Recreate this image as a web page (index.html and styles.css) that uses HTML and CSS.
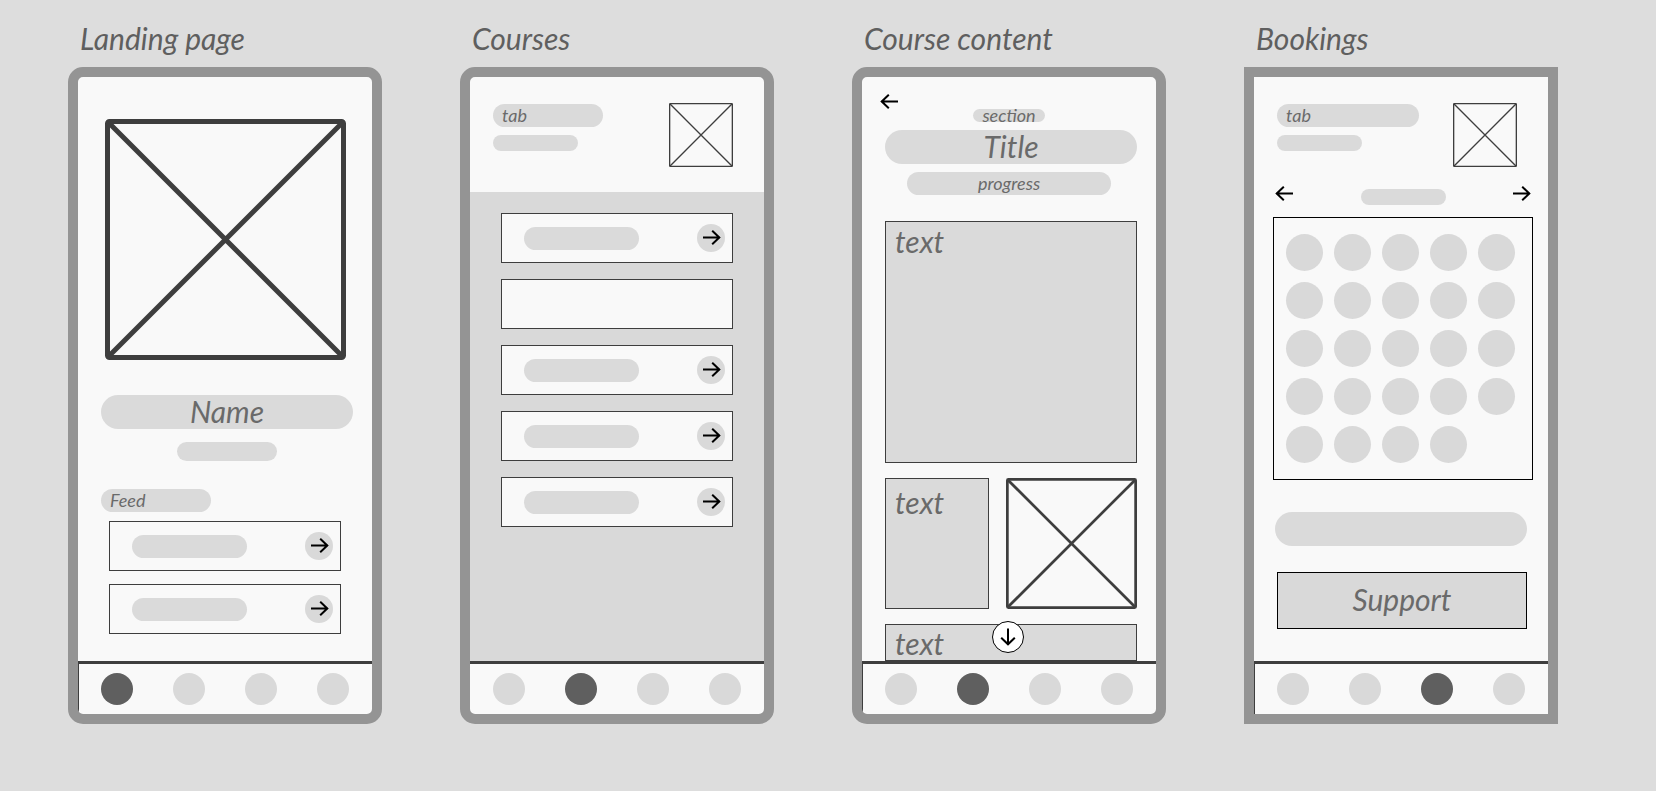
FILE: index.html
```html
<!DOCTYPE html>
<html lang="en">
<head>
<meta charset="utf-8">
<meta name="viewport" content="width=device-width, initial-scale=1">
<title>Course app wireframes</title>
<link rel="stylesheet" href="styles.css">
</head>
<body>
<svg class="sprite" aria-hidden="true">
  <symbol id="image" viewBox="0 0 241 241">
    <path d="M4 4L237 237M237 4L4 237" fill="none" stroke="#3e3e3e" stroke-width="5"/>
    <rect x="2.5" y="2.5" width="236" height="236" rx="2" fill="none" stroke="#3e3e3e" stroke-width="5"/>
  </symbol>
  <symbol id="right" viewBox="0 0 20 16">
    <path d="M2 7.5H19M11.2 0.7L18.3 7.5L11.2 14.3" fill="none" stroke="#000" stroke-width="2"/>
  </symbol>
  <symbol id="left" viewBox="0 0 20 16">
    <path d="M18 7.5H1M8.8 0.7L1.7 7.5L8.8 14.3" fill="none" stroke="#000" stroke-width="2"/>
  </symbol>
  <symbol id="down" viewBox="0 0 16 20">
    <path d="M8 1.5V18M1.2 10.7L8 17.3L14.8 10.7" fill="none" stroke="#000" stroke-width="2"/>
  </symbol>
</svg>

<main class="board">
  <section class="frame">
    <h2 class="frame-title">Landing page</h2>
    <div class="phone">
      <div class="screen">
        <svg class="hero" role="img" aria-label="Profile image"><use href="#image"/></svg>
        <div class="pill pill-large name">Name</div>
        <div class="subtitle-row"><div class="pill subtitle"></div></div>
        <h3 class="pill pill-tag feed-tag">Feed</h3>
        <div class="list feed">
          <div class="item"><span class="pill item-label"></span><button class="round" aria-label="Open"><svg class="icon"><use href="#right"/></svg></button></div>
          <div class="item"><span class="pill item-label"></span><button class="round" aria-label="Open"><svg class="icon"><use href="#right"/></svg></button></div>
        </div>
      </div>
      <nav class="tabs edge">
        <button class="dot active" aria-label="Home"></button><button class="dot" aria-label="Courses"></button><button class="dot" aria-label="Bookings"></button><button class="dot" aria-label="More"></button>
      </nav>
    </div>
  </section>

  <section class="frame">
    <h2 class="frame-title">Courses</h2>
    <div class="phone">
      <div class="screen">
        <header class="head">
          <div class="head-text"><h3 class="pill pill-tag">tab</h3><div class="pill pill-small"></div></div>
          <svg class="thumb" role="img" aria-label="Image"><use href="#image"/></svg>
        </header>
        <div class="list courses">
          <div class="item"><span class="pill item-label"></span><button class="round" aria-label="Open"><svg class="icon"><use href="#right"/></svg></button></div>
          <div class="item"></div>
          <div class="item"><span class="pill item-label"></span><button class="round" aria-label="Open"><svg class="icon"><use href="#right"/></svg></button></div>
          <div class="item"><span class="pill item-label"></span><button class="round" aria-label="Open"><svg class="icon"><use href="#right"/></svg></button></div>
          <div class="item"><span class="pill item-label"></span><button class="round" aria-label="Open"><svg class="icon"><use href="#right"/></svg></button></div>
        </div>
      </div>
      <nav class="tabs">
        <button class="dot" aria-label="Home"></button><button class="dot active" aria-label="Courses"></button><button class="dot" aria-label="Bookings"></button><button class="dot" aria-label="More"></button>
      </nav>
    </div>
  </section>

  <section class="frame">
    <h2 class="frame-title">Course content</h2>
    <div class="phone">
      <div class="screen">
        <div class="back-row"><button class="plain" aria-label="Back"><svg class="icon"><use href="#left"/></svg></button></div>
        <div class="pill section-tag">section</div>
        <h3 class="pill pill-large title">Title</h3>
        <div class="pill progress">progress</div>
        <div class="content">
          <div class="card card-tall">text</div>
          <div class="pair">
            <div class="card card-side">text</div>
            <svg class="picture" role="img" aria-label="Image"><use href="#image"/></svg>
          </div>
          <div class="card card-last">text<button class="scroll" aria-label="Scroll down"><svg class="icon-down"><use href="#down"/></svg></button></div>
        </div>
      </div>
      <nav class="tabs edge">
        <button class="dot" aria-label="Home"></button><button class="dot active" aria-label="Courses"></button><button class="dot" aria-label="Bookings"></button><button class="dot" aria-label="More"></button>
      </nav>
    </div>
  </section>

  <section class="frame">
    <h2 class="frame-title">Bookings</h2>
    <div class="phone square">
      <div class="screen">
        <header class="head head-short">
          <div class="head-text"><h3 class="pill pill-tag wide">tab</h3><div class="pill pill-small"></div></div>
          <svg class="thumb" role="img" aria-label="Image"><use href="#image"/></svg>
        </header>
        <div class="month">
          <button class="plain" aria-label="Previous month"><svg class="icon"><use href="#left"/></svg></button>
          <div class="pill pill-small month-name"></div>
          <button class="plain" aria-label="Next month"><svg class="icon"><use href="#right"/></svg></button>
        </div>
        <div class="calendar">
          <i class="day"></i><i class="day"></i><i class="day"></i><i class="day"></i><i class="day"></i>
          <i class="day"></i><i class="day"></i><i class="day"></i><i class="day"></i><i class="day"></i>
          <i class="day"></i><i class="day"></i><i class="day"></i><i class="day"></i><i class="day"></i>
          <i class="day"></i><i class="day"></i><i class="day"></i><i class="day"></i><i class="day"></i>
          <i class="day"></i><i class="day"></i><i class="day"></i><i class="day"></i>
        </div>
        <div class="pill pill-large booking"></div>
        <button class="support">Support</button>
      </div>
      <nav class="tabs edge">
        <button class="dot" aria-label="Home"></button><button class="dot" aria-label="Courses"></button><button class="dot active" aria-label="Bookings"></button><button class="dot" aria-label="More"></button>
      </nav>
    </div>
  </section>
</main>
</body>
</html>
```

FILE: styles.css
```css
* {
  box-sizing: border-box;
}

body {
  margin: 0;
  background: #dddddd;
  color: #6a6a6a;
  font-family: Lato, "Open Sans", sans-serif;
  font-style: italic;
}

h2,
h3 {
  margin: 0;
  font-weight: 400;
}

button {
  margin: 0;
  padding: 0;
  border: 0;
  background: none;
  color: inherit;
  font: inherit;
  cursor: pointer;
}

svg {
  display: block;
}

.sprite {
  position: absolute;
  width: 0;
  height: 0;
}

.board {
  display: grid;
  grid-template-columns: repeat(4, minmax(0, 1fr));
  gap: 78px;
  padding: 20px 98px 40px 68px;
}

.frame {
  display: flex;
  flex-direction: column;
}

.frame-title {
  margin-bottom: 11px;
  padding-left: 12px;
  color: #5f5f5f;
  font-size: 30px;
  line-height: 36px;
  white-space: nowrap;
}

.phone {
  display: flex;
  flex: 1;
  flex-direction: column;
  min-height: 657px;
  overflow: hidden;
  border: 10px solid #949494;
  border-radius: 15px;
  background: #f9f9f9;
}

.square {
  border-radius: 0;
}

.screen {
  display: flex;
  flex: 1;
  flex-direction: column;
}

/* Placeholder pills */
.pill {
  flex: none;
  border-radius: 17px;
  background: #dadada;
}

.pill-large {
  height: 34px;
  font-size: 30px;
  line-height: 32px;
  text-align: center;
}

.pill-tag {
  width: 110px;
  height: 23px;
  padding-left: 9px;
  font-size: 18px;
  line-height: 23px;
}

.wide {
  width: 142px;
}

.pill-small {
  width: 85px;
  height: 16px;
}

/* Landing page */
.hero {
  width: calc(100% - 53px);
  height: auto;
  aspect-ratio: 1;
  margin: 42px 26px 35px 27px;
}

.name {
  margin: 0 19px 13px 23px;
}

.subtitle-row {
  display: flex;
  justify-content: center;
  margin: 0 19px 28px 23px;
}

.subtitle {
  width: 100px;
  height: 19px;
}

.feed-tag {
  margin: 0 23px 9px;
}

/* Lists */
.list {
  display: flex;
  flex-direction: column;
  padding: 0 31px;
}

.feed {
  gap: 13px;
  padding-bottom: 27px;
}

.courses {
  flex: 1;
  gap: 16px;
  padding-top: 21px;
  background: #d9d9d9;
}

.item {
  display: flex;
  align-items: center;
  justify-content: space-between;
  height: 50px;
  padding: 0 7px 0 22px;
  border: 1px solid #3e3e3e;
  background: #f9f9f9;
}

.item-label {
  width: 115px;
  height: 23px;
}

.round {
  display: grid;
  place-items: center;
  width: 28px;
  height: 28px;
  border-radius: 50%;
  background: #d9d9d9;
}

.icon {
  width: 20px;
  height: 16px;
}

/* Screen header */
.head {
  display: flex;
  justify-content: space-between;
  height: 115px;
  padding: 26px 31px 0 23px;
}

.head-short {
  height: 109px;
}

.head-text {
  display: flex;
  flex-direction: column;
  gap: 8px;
  padding-top: 1px;
}

.thumb {
  width: 64px;
  height: 64px;
}

/* Course content */
.back-row {
  height: 32px;
  padding: 17px 18px 0;
}

.section-tag {
  align-self: center;
  width: 72px;
  height: 13px;
  margin-bottom: 8px;
  font-size: 18px;
  line-height: 13px;
  text-align: center;
}

.title {
  margin: 0 19px 8px 23px;
}

.progress {
  height: 23px;
  margin: 0 45px 26px;
  font-size: 18px;
  line-height: 23px;
  text-align: center;
}

.content {
  display: flex;
  flex: 1;
  flex-direction: column;
  gap: 15px;
  padding: 0 19px 0 23px;
}

.card {
  padding: 2px 9px;
  border: 1px solid #3e3e3e;
  background: #dadada;
  font-size: 30px;
  line-height: 34px;
}

.card-tall {
  height: 242px;
}

.pair {
  display: grid;
  grid-template-columns: 104fr 131fr;
  gap: 17px;
}

.card-side {
  padding-top: 6px;
}

.picture {
  width: 100%;
  height: auto;
  aspect-ratio: 1;
}

.card-last {
  position: relative;
  flex: 1;
  padding: 1px 9px 0;
}

.scroll {
  position: absolute;
  top: -4px;
  right: 6px;
  left: 0;
  display: grid;
  place-items: center;
  width: 32px;
  height: 32px;
  margin: 0 auto;
  border: 1px solid #000;
  border-radius: 50%;
  background: #fff;
}

.icon-down {
  width: 16px;
  height: 20px;
}

/* Bookings */
.month {
  display: flex;
  justify-content: space-between;
  height: 31px;
  padding: 0 17px 0 21px;
}

.plain {
  align-self: flex-start;
}

.month-name {
  margin-top: 3px;
}

.calendar {
  display: grid;
  grid-template-columns: repeat(5, 1fr);
  gap: 11px;
  margin: 0 15px 32px 19px;
  padding: 16px 17px 16px 12px;
  border: 1px solid #000;
}

.day {
  aspect-ratio: 1;
  border-radius: 50%;
  background: #d9d9d9;
}

.booking {
  margin: 0 21px 26px;
}

.support {
  height: 57px;
  margin: 0 21px 32px 23px;
  padding-bottom: 4px;
  border: 1px solid #000;
  background: #d9d9d9;
  font-size: 30px;
  line-height: 36px;
}

/* Bottom tab bar */
.tabs {
  display: flex;
  justify-content: space-between;
  padding: 9px 23px;
  border-top: 3px solid #3e3e3e;
}

.edge {
  padding-left: 22px;
  border-left: 1px solid #3e3e3e;
}

.dot {
  width: 32px;
  height: 32px;
  border-radius: 50%;
  background: #d9d9d9;
}

.active {
  background: #5f5f5f;
}

@media (max-width: 1300px) {
  .board {
    grid-template-columns: repeat(auto-fit, 314px);
  }
}
```
